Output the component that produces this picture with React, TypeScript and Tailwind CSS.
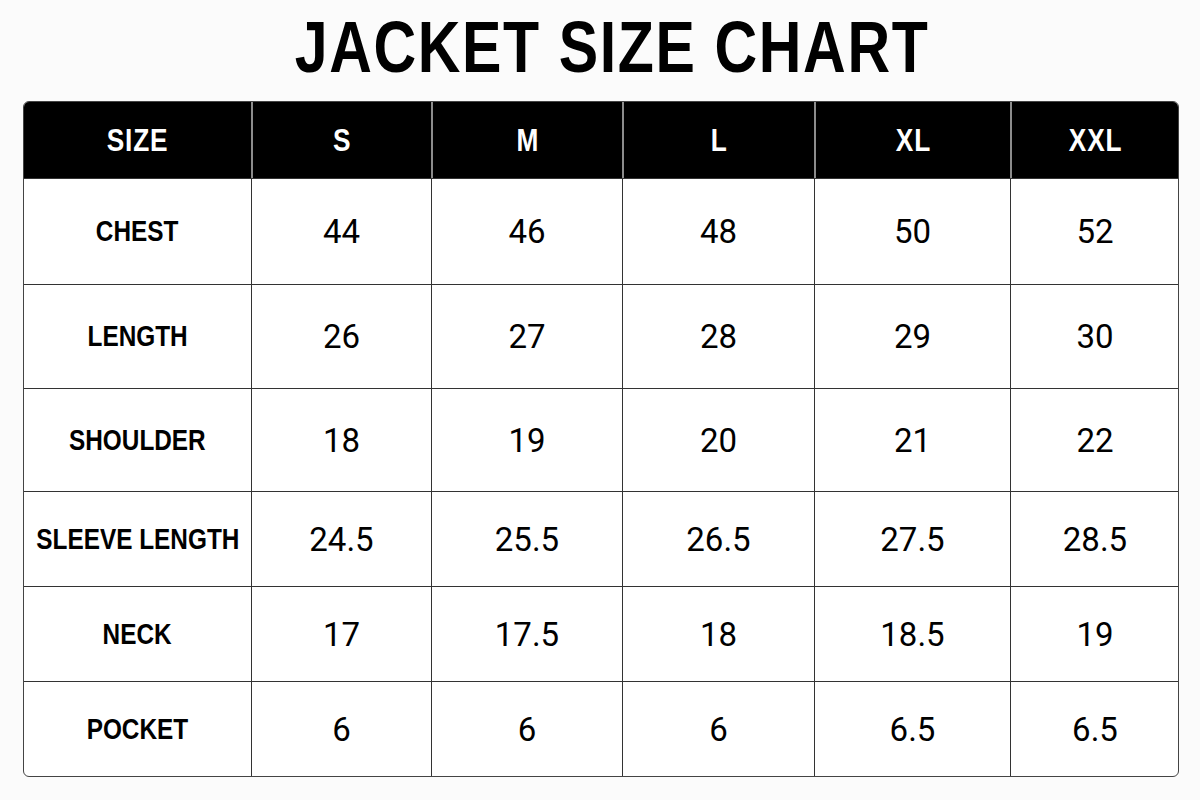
const sizes = ["S", "M", "L", "XL", "XXL"];

const rows: { label: string; values: string[]; h: string }[] = [
  { label: "CHEST", values: ["44", "46", "48", "50", "52"], h: "h-[106px]" },
  { label: "LENGTH", values: ["26", "27", "28", "29", "30"], h: "h-[104px]" },
  { label: "SHOULDER", values: ["18", "19", "20", "21", "22"], h: "h-[103px]" },
  { label: "SLEEVE LENGTH", values: ["24.5", "25.5", "26.5", "27.5", "28.5"], h: "h-[95px]" },
  { label: "NECK", values: ["17", "17.5", "18", "18.5", "19"], h: "h-[95px]" },
  { label: "POCKET", values: ["6", "6", "6", "6.5", "6.5"], h: "h-[95px]" },
];

const cols = "grid grid-cols-[227px_180px_191px_192px_196px_169px]";

// narrow bold caps: Liberation Sans squeezed to roughly Arial Narrow width
function Narrow({ children, className = "" }: { children: React.ReactNode; className?: string }) {
  return (
    <span className={`inline-block whitespace-nowrap font-bold scale-x-[0.82] ${className}`}>{children}</span>
  );
}

export default function App() {
  return (
    <div className="w-[1200px] h-[800px] bg-[#fbfbfb] font-['Liberation_Sans',Arial,sans-serif] text-black">
      <div className="h-[101px] flex items-center justify-center pb-[8px] pl-[24px]">
        <Narrow className="text-[72px] leading-none tracking-[2px]">JACKET SIZE CHART</Narrow>
      </div>

      <div className="ml-[23px] w-[1156px] border border-[#444] rounded-[6px] overflow-hidden bg-white">
        {/* header */}
        <div className={`${cols} h-[76px] bg-black text-white`}>
          <div className="flex items-center justify-center">
            <Narrow className="text-[32px] leading-none tracking-[1px]">SIZE</Narrow>
          </div>
          {sizes.map((s) => (
            <div key={s} className="flex items-center justify-center border-l-2 border-[#8c8c8c]">
              <Narrow className="text-[32px] leading-none tracking-[1px]">{s}</Narrow>
            </div>
          ))}
        </div>

        {/* body */}
        {rows.map((row) => (
          <div key={row.label} className={`${cols} ${row.h} border-t-[1.5px] border-[#333]`}>
            <div className="flex items-center justify-center">
              <Narrow className="text-[29px] leading-none scale-x-[0.84]">{row.label}</Narrow>
            </div>
            {row.values.map((v, i) => (
              <div
                key={i}
                className="flex items-center justify-center border-l-[1.5px] border-[#333] font-['Roboto',sans-serif] text-[33px] leading-none"
              >
                {v}
              </div>
            ))}
          </div>
        ))}
      </div>
    </div>
  );
}
